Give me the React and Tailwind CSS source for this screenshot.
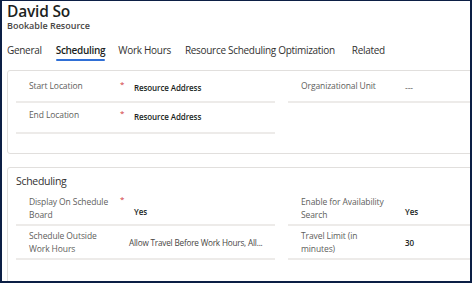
export default function App() {
  const font = { fontFamily: '"Open Sans", "Noto Sans", sans-serif' };
  return (
    <div
      className="w-[472px] h-[283px] overflow-hidden bg-white border-x-2 border-t border-b-2 border-[#0c1f45] box-border text-[#323130]"
      style={font}
    >
      <div className="pl-[5px] pt-[2px]">
        <div className="text-[15.5px] leading-[17px] font-semibold text-[#201f1e] tracking-[-0.2px]">David So</div>
        <div className="text-[9px] leading-[11px] font-semibold text-[#484644]">Bookable Resource</div>
        <div className="flex items-start mt-[12px] text-[10px] leading-[14px] tracking-[-0.3px]">
          <div className="mr-[14px]">General</div>
          <div className="mr-[13px] font-semibold text-[#201f1e] flex flex-col">
            <span>Scheduling</span>
            <span className="h-[2px] bg-[#2f6fd6] mt-[2px] rounded-full"></span>
          </div>
          <div className="mr-[14px]">Work Hours</div>
          <div className="mr-[17px]">Resource Scheduling Optimization</div>
          <div>Related</div>
        </div>
        <div className="mt-[9px] w-[520px] border border-[#e1dfdd] rounded-[3px] h-[84px] pl-[8px] flex gap-[13px]">
          <div className="w-[259px] flex flex-col">
            <Row label="Start Location" value="Resource Address" h="h-[32px]" pt="pt-[8px]" />
            <Row label="End Location" value="Resource Address" h="h-[31px]" pt="pt-[5px]" />
          </div>
          <div className="flex-1 flex flex-col">
            <Row label="Organizational Unit" value="---" plain right h="h-[32px]" pt="pt-[8px]" />
          </div>
        </div>
        <div className="mt-[13px] w-[520px] border border-[#e1dfdd] rounded-[3px] h-[140px] pl-[8px] pt-[5px]">
          <div className="text-[10.5px] leading-[16px] tracking-[-0.3px] text-[#323130] mb-[2px]">Scheduling</div>
          <div className="flex gap-[13px]">
            <div className="w-[259px] flex flex-col">
              <Row2 l1="Display On Schedule" l2="Board" req value="Yes" bold h="h-[35px]" vpt="pt-[7px]" />
              <Row2 l1="Schedule Outside" l2="Work Hours" value="Allow Travel Before Work Hours, All..." shift h="h-[34px]" vpt="pt-[1px]" />
            </div>
            <div className="flex-1 flex flex-col">
              <Row2 l1="Enable for Availability" l2="Search" value="Yes" bold right h="h-[35px]" vpt="pt-[7px]" />
              <Row2 l1="Travel Limit (in" l2="minutes)" value="30" bold right h="h-[34px]" vpt="pt-[1px]" />
            </div>
          </div>
        </div>
      </div>
    </div>
  );
}

function Row({ label, value, plain, right, h, pt }) {
  return (
    <div className={`${h} border-b-2 border-[#edebe9] flex items-start pl-[13px] text-[8.5px] leading-[13px] tracking-[-0.1px]`}>
      <div className={`${right ? "w-[104px]" : "w-[91px]"} shrink-0 text-[#605e5c] ${pt}`}>{label}</div>
      {!right && <div className={`w-[14px] shrink-0 text-[#d13438] text-[8px] leading-[10px] ${pt}`}>*</div>}
      <div className={`${plain ? "text-[#605e5c]" : "font-semibold text-[#201f1e] text-[8px]"} ${pt} mt-[1.5px]`}>{value}</div>
    </div>
  );
}

function Row2({ l1, l2, value, req, bold, right, shift, h, vpt }) {
  return (
    <div className={`${h} border-b-2 border-[#edebe9] flex items-center pl-[13px] text-[8.5px] leading-[13px] tracking-[-0.1px]`}>
      <div className={`${right ? "w-[104px]" : "w-[91px]"} shrink-0 text-[#605e5c] flex flex-col`}>
        <span>{l1}</span>
        <span>{l2}</span>
      </div>
      {!right && (
        <div className={`${shift ? "w-[9px]" : "w-[14px]"} shrink-0 text-[#d13438] self-start pt-[3px] text-[8px] leading-[10px]`}>
          {req ? "*" : ""}
        </div>
      )}
      <div
        className={`${bold ? "font-semibold text-[#201f1e] text-[8px]" : "text-[#484644] text-[8.2px] tracking-[-0.2px]"} ${vpt} whitespace-nowrap`}
      >
        {value}
      </div>
    </div>
  );
}
